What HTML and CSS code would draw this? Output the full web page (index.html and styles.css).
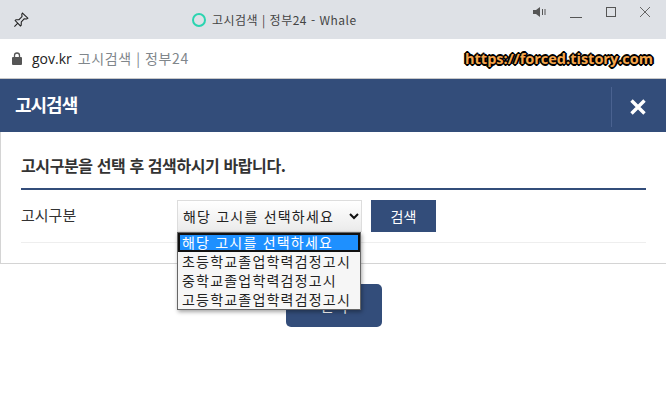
FILE: index.html
```html
<!DOCTYPE html>
<html lang="ko">
<head>
    <meta charset="UTF-8">
    <title>고시검색 | 정부24 - Whale</title>
    <link rel="stylesheet" href="styles.css">
</head>
<body>
    <div class="titlebar">
        <svg class="pin" width="16" height="16" viewBox="0 0 16 16">
            <path d="M9.5 1.2 L14.8 6.2 L13.6 7 L11.2 6.8 L8.3 10 L8.2 13.2 L7.4 14 L2.2 8.6 L3 7.8 L6 7.6 L9 4.6 L8.8 2.2 Z M4.6 11.4 L1.4 14.6" fill="none" stroke="#222" stroke-width="1.1"/>
        </svg>
        <div class="win-title"><span class="ring"></span>고시검색 | 정부24 - Whale</div>
        <div class="win-btns">
            <svg width="14" height="12" viewBox="0 0 14 12"><path d="M0 4H3L7 1V11L3 8H0Z M9 3H10V9H9Z M11.5 3H12.5V9H11.5Z" fill="#555"/></svg>
            <svg width="14" height="14" viewBox="0 0 14 14"><path d="M1 12.5H13" stroke="#555" fill="none"/></svg>
            <svg width="12" height="12" viewBox="0 0 12 12"><rect x="1.5" y="1.5" width="9" height="9" stroke="#555" fill="none"/></svg>
            <svg width="12" height="12" viewBox="0 0 12 12"><path d="M1 1L11 11M11 1L1 11" stroke="#666" fill="none"/></svg>
        </div>
    </div>
    <div class="addressbar">
        <svg width="10" height="13" viewBox="0 0 10 13"><path d="M2.5 5V3.5a2.5 2.5 0 0 1 5 0V5" stroke="#555" stroke-width="1.3" fill="none"/><rect y="5" width="10" height="8" rx="1" fill="#555"/></svg>
        <span class="domain">gov.kr</span>
        <span class="page-name">고시검색 | 정부24</span>
        <span class="watermark">https://forced.tistory.com</span>
    </div>
    <div class="popup-head">
        <h1>고시검색</h1>
        <div class="close-box">
            <svg width="18" height="18" viewBox="0 0 18 18"><path d="M2.5 2.5L15.5 15.5M15.5 2.5L2.5 15.5" stroke="#fff" stroke-width="3.4" fill="none"/></svg>
        </div>
    </div>
    <div class="panel">
        <h2>고시구분을 선택 후 검색하시기 바랍니다.</h2>
        <div class="form-row">
            <label class="form-label">고시구분</label>
            <div class="select-wrap">
                <div class="select-box">
                    <span>해당 고시를 선택하세요</span>
                    <svg width="10" height="7" viewBox="0 0 10 7"><path d="M1 1L5 5L9 1" stroke="#111" stroke-width="2" fill="none"/></svg>
                </div>
                <ul class="dropdown">
                    <li class="selected">해당 고시를 선택하세요</li>
                    <li>초등학교졸업학력검정고시</li>
                    <li>중학교졸업학력검정고시</li>
                    <li>고등학교졸업학력검정고시</li>
                </ul>
            </div>
            <button class="search-btn">검색</button>
        </div>
    </div>
    <div class="bottom">
        <button class="confirm-btn">선택</button>
    </div>
</body>
</html>
```
FILE: styles.css
```css
body {
    margin: 0;
    background: #fff;
    font-family: "Noto Sans CJK KR", "Noto Sans", sans-serif;
    color: #333;
}
.titlebar {
    height: 39px;
    background: #dee1e6;
    display: flex;
    align-items: center;
    position: relative;
}
.pin {
    margin-left: 13px;
}
.win-title {
    display: flex;
    align-items: center;
    margin-left: 163px;
    font-size: 12px;
    letter-spacing: 0.5px;
    color: #444;
}
.ring {
    width: 10px;
    height: 10px;
    border: 2px solid #2bd4b0;
    border-radius: 50%;
    margin-right: 6px;
}
.win-btns {
    position: absolute;
    top: 5px;
    right: 15px;
    display: flex;
    align-items: center;
    gap: 22px;
}
.addressbar {
    height: 38px;
    padding: 0 0 1px 12px;
    display: flex;
    align-items: center;
    border-bottom: 1px solid #c8c8c8;
    font-size: 14px;
}
.domain {
    margin-left: 10px;
    font-family: "Open Sans", sans-serif;
    color: #222;
}
.page-name {
    margin-left: 6px;
    color: #80868b;
    letter-spacing: 0.6px;
}
.watermark {
    margin-left: auto;
    margin-right: 13px;
    font-family: "Open Sans", sans-serif;
    font-size: 14.5px;
    font-weight: 700;
    color: #f5a54a;
    text-shadow: -2px 0 #000, 2px 0 #000, 0 -2px #000, 0 2px #000, -1px -1px #000, 1px 1px #000, -1px 1px #000, 1px -1px #000;
}
.popup-head {
    height: 53px;
    background: #334d7a;
    display: flex;
    align-items: center;
    justify-content: space-between;
}
.popup-head h1 {
    margin: 0 0 3px 15px;
    font-size: 18px;
    font-weight: 700;
    letter-spacing: -1px;
    color: #fff;
}
.close-box {
    width: 55px;
    height: 40px;
    margin-top: 2px;
    padding-right: 2px;
    box-sizing: border-box;
    border-left: 1px solid #4a6290;
    display: flex;
    align-items: center;
    justify-content: center;
}
.panel {
    height: 131px;
    padding: 0 20px;
    border-left: 1px solid #d4d4d4;
    border-bottom: 1px solid #d4d4d4;
}
.panel h2 {
    margin: 0;
    padding: 21px 0 11px;
    height: 24px;
    line-height: 24px;
    font-size: 16px;
    font-weight: 700;
    letter-spacing: -0.4px;
    border-bottom: 2px solid #334d7a;
}
.form-row {
    height: 53px;
    display: flex;
    padding-top: 10px;
    box-sizing: border-box;
    border-bottom: 1px solid #eee;
}
.form-label {
    width: 156px;
    font-size: 15px;
    line-height: 30px;
}
.select-wrap {
    position: relative;
    width: 185px;
}
.select-box {
    height: 32px;
    box-sizing: border-box;
    padding: 0 2px 0 5px;
    border: 1px solid #ddd;
    background: linear-gradient(#fff, #ebebeb);
    display: flex;
    align-items: center;
    justify-content: space-between;
    font-size: 14px;
    letter-spacing: 1.2px;
    color: #222;
}
.dropdown {
    position: absolute;
    top: 32px;
    left: 0;
    width: 184px;
    box-sizing: border-box;
    margin: 0;
    padding: 0;
    list-style: none;
    background: #f6f6f6;
    border: 1px solid #666;
    box-shadow: 1px 2px 4px rgba(0, 0, 0, 0.35);
    font-size: 14px;
    letter-spacing: 1.2px;
    color: #222;
}
.dropdown li {
    height: 19px;
    line-height: 19px;
    padding-left: 4px;
}
.dropdown .selected {
    background: #1e90ff;
    color: #fff;
    outline: 2px solid #111;
    outline-offset: -2px;
}
.search-btn {
    width: 65px;
    height: 32px;
    margin-left: 9px;
    border: 0;
    background: #334d7a;
    color: #fff;
    font-family: inherit;
    font-size: 14px;
}
.bottom {
    display: flex;
    justify-content: center;
    padding-top: 20px;
}
.confirm-btn {
    width: 96px;
    height: 43px;
    margin-left: 1px;
    border: 0;
    border-radius: 5px;
    background: #334d7a;
    color: #fff;
    font-family: inherit;
    font-size: 15px;
}
```
